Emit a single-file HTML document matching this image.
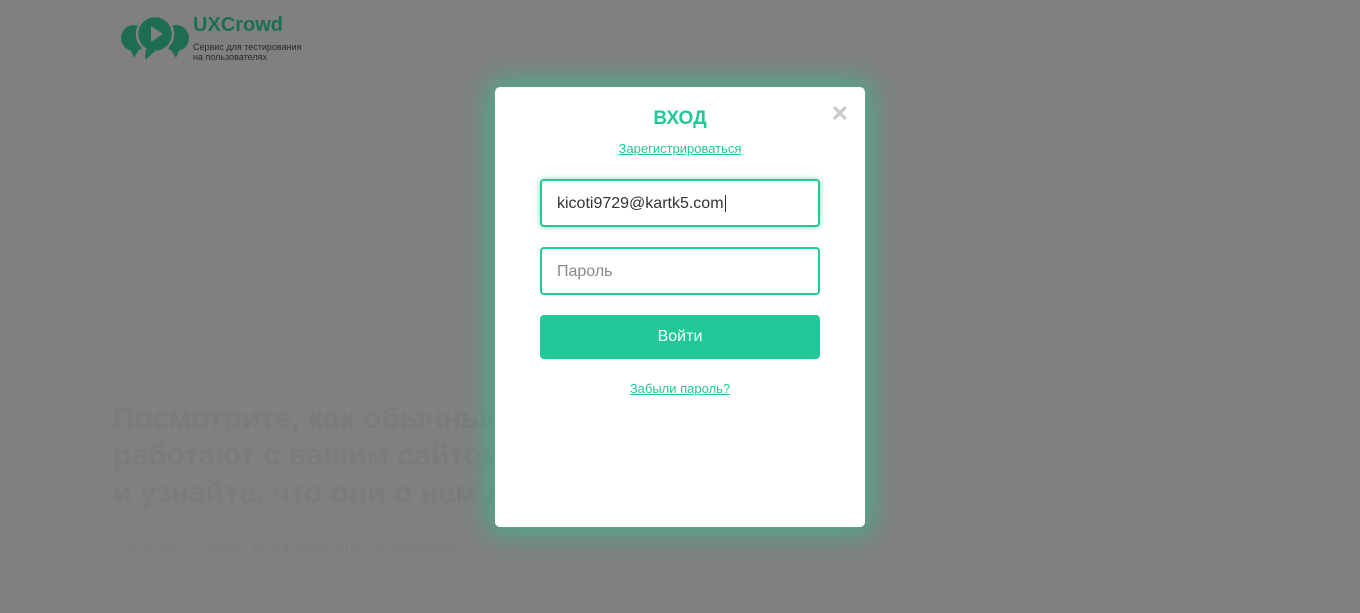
<!DOCTYPE html>
<html><head><meta charset="utf-8"><style>
*{box-sizing:border-box;margin:0;padding:0}
body{width:1360px;height:613px;overflow:hidden;background:#808080;font-family:"Liberation Sans",sans-serif;position:relative}
.logo{position:absolute;left:120px;top:14px}
.bg{position:absolute;left:113px;top:400px;color:#7b7b7b;font-size:30px;font-weight:bold;line-height:37px;width:380px;white-space:nowrap;overflow:hidden}
.bg2{position:absolute;left:113px;top:538px;color:#7c7c7c;font-size:15px;white-space:nowrap;width:380px;overflow:hidden}
.modal{position:absolute;left:495px;top:87px;width:370px;height:440px;background:#fff;border-radius:5px;box-shadow:0 0 25px 8px rgba(40,200,150,.55)}
.t{position:absolute;top:21px;width:100%;text-align:center;color:#22c898;font-weight:bold;font-size:19px}
.x{position:absolute;right:16px;top:14px;color:#c8c8c8;font-size:22px;font-weight:bold}
.reg{position:absolute;top:54px;width:100%;text-align:center;color:#22c898;font-size:13px;text-decoration:underline}
.in{position:absolute;left:45px;width:280px;height:48px;border:2px solid #22c898;border-radius:4px;padding:0 15px;font-size:16px;line-height:46px;color:#333}
.btn{position:absolute;left:45px;top:228px;width:280px;height:44px;background:#22c898;border-radius:4px;color:#fff;text-align:center;line-height:44px;font-size:16px}
.fg{position:absolute;top:294px;width:100%;text-align:center;color:#22c898;font-size:13px;text-decoration:underline}
</style></head><body>
<div class="logo">
<svg width="70" height="48" viewBox="0 0 70 48">
<circle cx="14" cy="24" r="13" fill="#1d6e50"/>
<path d="M10 34 L14 44 L20 34Z" fill="#1d6e50"/>
<circle cx="56" cy="24" r="13" fill="#1d6e50"/>
<path d="M60 34 L56 44 L50 34Z" fill="#1d6e50"/>
<circle cx="35" cy="20" r="18" fill="#1d6e50" stroke="#808080" stroke-width="2.5"/>
<path d="M26 35 L25 46 L35 37Z" fill="#1d6e50"/>
<path d="M31 12 L43 20 L31 28 Z" fill="#808080"/>
</svg>
<div style="position:absolute;left:73px;top:0;color:#1d6e50;font-weight:bold;font-size:20px">UXCrowd</div>
<div style="position:absolute;left:73px;top:28px;color:#2a2a2a;font-size:9px;line-height:10px;white-space:nowrap">Сервис для тестирования<br>на пользователях</div>
</div>
<div class="bg">Посмотрите, как обычные пользователи<br>работают с вашим сайтом или<br>и узнайте, что они о нем думают</div>
<div class="bg2">UXCrowd — сервис для юзабилити-тестирования</div>
<div class="modal">
<div class="t">ВХОД</div><div class="x">✕</div>
<div class="reg">Зарегистрироваться</div>
<div class="in" style="top:92px;box-shadow:0 0 6px rgba(34,200,152,.6)">kicoti9729@kartk5.com<span style="border-left:1px solid #333;margin-left:1px"></span></div>
<div class="in" style="top:160px;color:#888">Пароль</div>
<div class="btn">Войти</div>
<div class="fg">Забыли пароль?</div>
</div>
</body></html>
